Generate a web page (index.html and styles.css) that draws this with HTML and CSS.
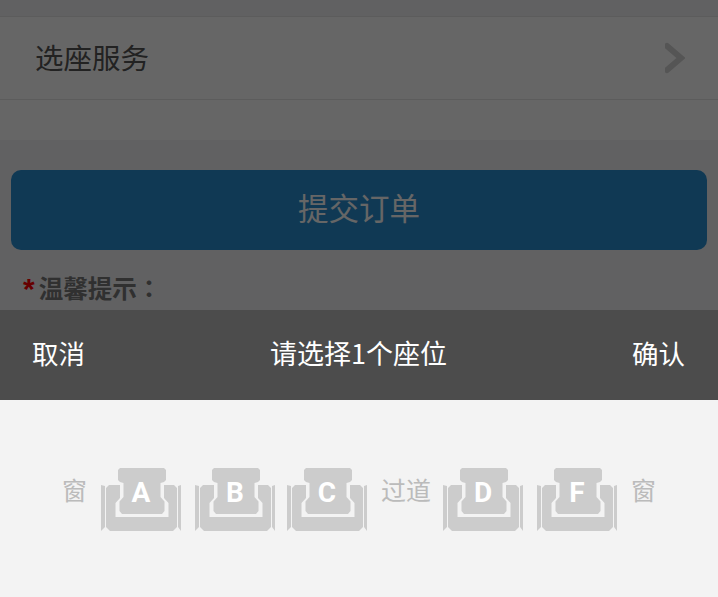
FILE: index.html
```html
<!DOCTYPE html>
<html lang="zh">
<head>
    <meta charset="UTF-8">
    <meta name="viewport" content="width=device-width, initial-scale=1.0">
    <title>选座服务</title>
    <link rel="stylesheet" href="styles.css">
</head>
<body>

    <div class="page">
        <div class="row">
            <span>选座服务</span>
            <svg class="arrow" viewBox="0 0 20 34"><path d="M2 5 L16 17 L2 29"/></svg>
        </div>
        <button class="submit" type="button">提交订单</button>
        <p class="tip" lang="zh-TW"><span class="star">*</span>温馨提示：</p>
    </div>

    <div class="mask"></div>

    <div class="sheet">
        <div class="bar">
            <span>取消</span>
            <span class="bar-title">请选择1个座位</span>
            <span>确认</span>
        </div>
        <div class="seats">
            <span class="label">窗</span>
            <div class="seat">
                <svg viewBox="0 0 80 63"><use href="#chair"/></svg>
                <b>A</b>
            </div>
            <div class="seat">
                <svg viewBox="0 0 80 63"><use href="#chair"/></svg>
                <b>B</b>
            </div>
            <div class="seat seat-tight">
                <svg viewBox="0 0 80 63"><use href="#chair"/></svg>
                <b>C</b>
            </div>
            <span class="label aisle">过道</span>
            <div class="seat">
                <svg viewBox="0 0 80 63"><use href="#chair"/></svg>
                <b>D</b>
            </div>
            <div class="seat">
                <svg viewBox="0 0 80 63"><use href="#chair"/></svg>
                <b>F</b>
            </div>
            <span class="label">窗</span>
        </div>
    </div>

    <svg class="defs" width="0" height="0">
        <g id="chair">
            <path d="M0 17 L4 18 L4 59 L0 63 Z"/>
            <path d="M80 17 L77 18 L77 59 L80 63 Z"/>
            <path d="M5 20 L8 17 L19 17 L19 30 L14.5 35 L14.5 49 L67.5 49 L67.5 35 L63 30 L63 17 L73 17 L76 20 L76 59 L72 63 L9 63 L5 59 Z"/>
            <path d="M17 2 L19 0 L63 0 L65 2 L65 12 L63 14 L59.5 15 L59.5 29 L63.5 33.5 L63.5 43 L61 46 L21 46 L18.5 43 L18.5 33.5 L22.5 29 L22.5 15 L19 14 L17 12 Z"/>
        </g>
    </svg>

</body>
</html>
```

FILE: styles.css
```css
body {
    margin: 0;
    height: 597px;
    overflow: hidden;
    font-family: "Noto Sans CJK SC", "Liberation Sans", sans-serif;
}

.page {
    height: 597px;
    padding-top: 16px;
    box-sizing: border-box;
    background: #f2f2f4;
}

.row {
    display: flex;
    align-items: center;
    justify-content: space-between;
    height: 124px;
    padding: 0 33px 41px 35px;
    box-sizing: border-box;
    background: #fff;
    border-top: 1px solid #e6e6e6;
    font-size: 28.5px;
    color: #555;
    position: relative;
}

.row span {
    margin-top: -4px;
}

.row::after {
    content: "";
    position: absolute;
    left: 0;
    right: 0;
    bottom: 40px;
    height: 1px;
    background: #e6e6e6;
}

.arrow {
    width: 20px;
    height: 34px;
    fill: none;
    stroke: #d4d4d4;
    stroke-width: 6;
    stroke-linecap: round;
}

.submit {
    display: block;
    width: 696px;
    height: 80px;
    margin: 30px 0 0 11px;
    padding: 0 0 7px;
    border: none;
    border-radius: 10px;
    background: #288ed2;
    color: #fff;
    font-family: inherit;
    font-size: 30.5px;
}

.tip {
    margin: 18px 0 0 23px;
    font-family: "Noto Sans CJK TC", "Liberation Sans", sans-serif;
    font-size: 24.5px;
    line-height: 40px;
    font-weight: bold;
    color: #787878;
}

.star {
    color: #f00;
    margin-right: 4px;
    font-family: "Liberation Sans", sans-serif;
    font-size: 30px;
    vertical-align: -1px;
}

.mask {
    position: absolute;
    top: 0;
    left: 0;
    right: 0;
    bottom: 0;
    background: rgba(0, 0, 0, 0.6);
}

.sheet {
    position: absolute;
    left: 0;
    right: 0;
    top: 310px;
    height: 287px;
    background: #f3f3f3;
}

.bar {
    display: flex;
    align-items: center;
    justify-content: space-between;
    height: 90px;
    padding: 0 33px 5px 32px;
    box-sizing: border-box;
    background: #4c4c4c;
    color: #fff;
    font-size: 26.5px;
}

.bar-title {
    font-size: 27px;
}

.seats {
    display: flex;
    gap: 14px;
    padding: 68px 0 0 62px;
}

.label {
    font-size: 25px;
    line-height: 43px;
    color: #bbb;
}

.aisle {
    margin-right: -2px;
}

.seat {
    position: relative;
    width: 80px;
    height: 63px;
}

.seat-tight {
    margin-left: -2px;
}

.seat svg {
    display: block;
    width: 80px;
    height: 63px;
    fill: #ccc;
}

.seat b {
    position: absolute;
    top: 7px;
    left: 0;
    right: 0;
    text-align: center;
    font-family: Roboto, sans-serif;
    font-size: 28px;
    line-height: 36px;
    color: #fff;
}

.defs {
    position: absolute;
}
```
